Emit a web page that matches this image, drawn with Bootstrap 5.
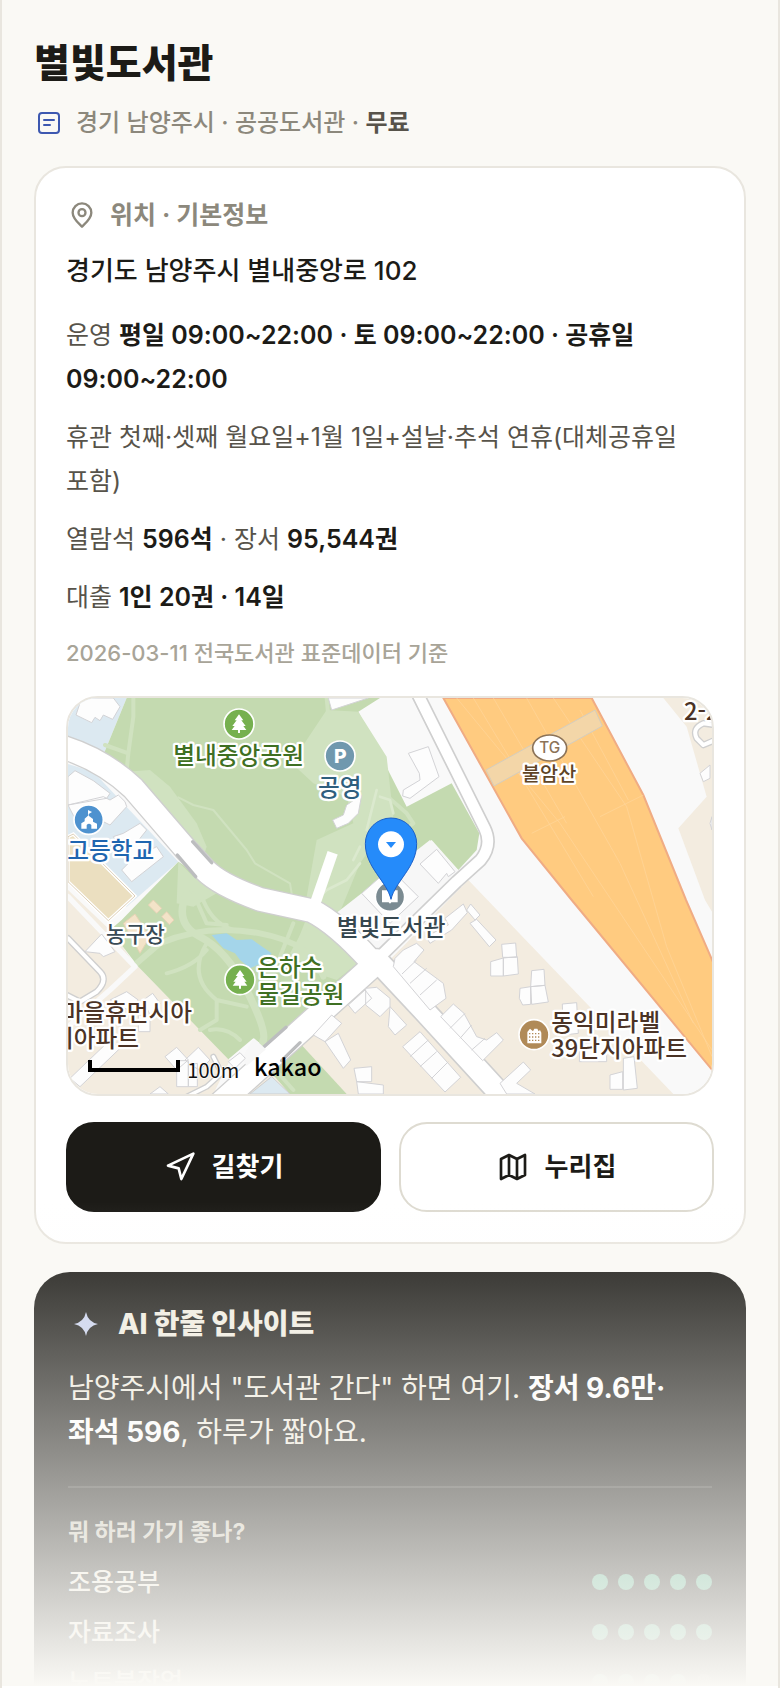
<!DOCTYPE html>
<html lang="ko">
<head>
<meta charset="utf-8">
<meta name="viewport" content="width=device-width, initial-scale=1">
<title>별빛도서관</title>
<link href="https://cdn.jsdelivr.net/npm/bootstrap@5.3.0/dist/css/bootstrap.min.css" rel="stylesheet">
<style>
  :root { --ink: #1c1b17; --soft: #57534a; --muted: #8c887c; --faint: #a8a498; --line: #e9e6df; --paper: #faf9f5; }
  body { font-family: Inter, "Noto Sans CJK KR", sans-serif; font-size: 25px; line-height: 44px; color: var(--ink); background: #fff; word-break: keep-all; }
  svg { flex: none; }
  .shell { height: 100vh; overflow: hidden; background: var(--paper); border: solid var(--line); border-width: 0 2px; padding: 36px 32px 0; }
  .lib-title { font-size: 39px; line-height: 54px; font-weight: 800; margin-bottom: 12px; }
  .lib-sub { font-size: 24px; line-height: 42px; font-weight: 500; color: var(--muted); padding-left: 4px; gap: 16px; margin-bottom: 22px; }
  .lib-sub strong { color: var(--soft); font-weight: 700; }
  .info-card { border: 2px solid var(--line); border-radius: 32px; padding: 29px 30px 30px; margin-bottom: 28px; }
  .sec-head { font-size: 25px; line-height: 36px; font-weight: 700; color: var(--muted); gap: 14px; margin-bottom: 16px; padding-left: 2px; }
  .addr { font-size: 26px; line-height: 44px; font-weight: 500; margin-bottom: 20px; }
  .facts { gap: 14px; color: var(--soft); margin-bottom: 14px; }
  .facts p { margin: 0; }
  .facts strong { color: var(--ink); font-weight: 600; }
  .source { font-size: 22px; line-height: 40px; font-weight: 500; color: var(--faint); margin-bottom: 23px; }
  .mapbox { height: 400px; border: 2px solid var(--line); border-radius: 32px; overflow: hidden; margin-bottom: 26px; }
  .mapbox svg { width: 100%; height: 100%; display: block; }
  .act { --bs-btn-font-size: 26px; --bs-btn-line-height: 44px; --bs-btn-font-weight: 700; --bs-btn-border-width: 2px; --bs-btn-border-radius: 28px; --bs-btn-padding-y: 21px; gap: 16px; }
  .act-main { --bs-btn-bg: var(--ink); --bs-btn-color: #fff; --bs-btn-border-color: var(--ink); --bs-btn-hover-bg: #333; --bs-btn-hover-color: #fff; }
  .act-side { --bs-btn-bg: #fff; --bs-btn-color: var(--ink); --bs-btn-border-color: #dedbd1; --bs-btn-hover-bg: #f4f3ee; }
  .acts { gap: 18px; }
  .insight { background: var(--ink); color: #f0ece0; border-radius: 36px; padding: 32px 34px; }
  .insight h2 { font-size: 28px; line-height: 40px; font-weight: 800; gap: 18px; margin-bottom: 22px; padding-left: 4px; }
  .lead-text { font-size: 28px; line-height: 44px; margin-bottom: 32px; }
  .lead-text strong { color: #fff; font-weight: 700; }
  .fit { border-top: 2px solid #3a3934; padding-top: 24px; }
  .fit h3 { font-size: 23px; line-height: 40px; font-weight: 700; margin-bottom: 10px; color: #c9c5b8; }
  .fit li { font-size: 25px; line-height: 40px; margin-bottom: 10px; font-weight: 500; }
  .dots { gap: 10px; }
  .dots i { width: 16px; height: 16px; border-radius: 50%; background: #4faa86; }
  .dots i.off { background: #3a3934; }
  .veil { height: 486px; background: linear-gradient(rgba(250,249,245,0), #faf9f5); border-bottom: 2px solid #fff; pointer-events: none; }
  .lbl { font-family: "Noto Sans CJK KR", sans-serif; font-weight: 500; font-size: 71px; stroke: #fff; stroke-width: 14px; stroke-linejoin: round; paint-order: stroke; }
  .lbl-court { font-size: 64px; }
  .lbl-toll { font-size: 59px; }
</style>
</head>
<body>
<main class="shell position-relative">
  <h1 class="lib-title">별빛도서관</h1>
  <div class="lib-sub d-flex align-items-center">
    <svg width="22" height="22" viewBox="0 0 22 22" fill="none" stroke="#3d58b0" stroke-width="2" stroke-linecap="round"><rect x="1" y="1" width="20" height="20" rx="3"/><path d="M6 8h10M6 13h6"/></svg>
    <span>경기 남양주시 · 공공도서관 · <strong>무료</strong></span>
  </div>

  <section class="card info-card">
    <h2 class="sec-head d-flex align-items-center">
      <svg width="28" height="28" viewBox="0 0 24 24" fill="none" stroke="#8c887c" stroke-width="2" stroke-linecap="round" stroke-linejoin="round"><path d="M20 10c0 5-5 9-8 12-3-3-8-7-8-12a8 8 0 0 1 16 0z"/><circle cx="12" cy="10" r="3"/></svg>
      위치 · 기본정보
    </h2>
    <p class="addr">경기도 남양주시 별내중앙로 102</p>
    <div class="facts d-flex flex-column">
      <p>운영 <strong>평일 09:00~22:00 · 토 09:00~22:00 · 공휴일 09:00~22:00</strong></p>
      <p>휴관 첫째·셋째 월요일+1월 1일+설날·추석 연휴(대체공휴일 포함)</p>
      <p>열람석 <strong>596석</strong> · 장서 <strong>95,544권</strong></p>
      <p>대출 <strong>1인 20권 · 14일</strong></p>
    </div>
    <p class="source">2026-03-11 전국도서관 표준데이터 기준</p>

    <div class="mapbox">
      <svg viewBox="24 24 1932 1188" preserveAspectRatio="xMidYMid slice" role="img" aria-label="별빛도서관 주변 지도">
        <rect x="24" y="24" width="1932" height="1188" fill="#f9f9f9"/>
        <!-- districts -->
        <g fill="#f3ece0">
          <path d="M24 600L165 735 215 810 510 1110 460 1212H24z"/>
          <path d="M1225 570L1840 1212H560L935 865z"/>
          <path d="M1810 24L1880 110 1940 320 1855 415 1935 630 1956 665V24z"/>
        </g>
        <path d="M24 24H200L130 195 24 140z" fill="#dce9f1"/>
        <path d="M24 222L100 245 355 515 200 650 24 560z" fill="#dce9f1"/>
        <g fill="#c4dab0">
          <path d="M200 24H960L895 65 1040 350 1175 280 1258 430 1250 480 1195 540 1115 450 830 690 620 620 480 560 250 310 130 195z"/>
          <path d="M355 515L185 690 150 720 235 830 505 1108 580 1045 620 1075 893 820 830 750 750 695 580 650 440 570z"/>
          <path d="M720 1060L860 1212H690L600 1110z"/>
        </g>
        <!-- paler lawns -->
        <g fill="#d0e2c0">
          <path d="M200 245L270 240 330 290 410 400 440 470 430 500 250 310z"/>
          <path d="M800 60L895 65 980 200 1000 380 900 520 830 690 740 620 770 450 880 400 860 320 760 280 695 220 740 150z"/>
          <path d="M355 515L400 560 470 610 400 650 350 640z"/>
          <path d="M770 700L893 820 830 870 770 850 690 790 740 700z"/>
        </g>
        <g fill="none" stroke="#d0e2c0" stroke-width="12" stroke-linecap="round" stroke-linejoin="round">
          <path d="M220 24V80L205 190 200 240M135 165L205 190M800 24L805 80"/>
          <path d="M355 322L400 345 460 360 560 480 585 520 690 580 695 610" stroke-width="6"/>
          <path d="M380 610Q340 700 420 740T560 900 610 1050 640 1060" stroke-width="22"/>
          <path d="M230 820L300 760Q440 700 600 730T790 860" stroke-width="18"/>
          <path d="M320 850Q400 830 440 780M440 760Q380 860 470 930L560 950M470 930V990L420 1020M450 1020Q500 1010 540 1050M420 605Q450 700 520 720M400 610L440 700 500 705"/>
          <path d="M950 300L920 420 960 480M960 300L1040 370 1060 400 1020 430M700 700L660 800M740 700L700 800M620 1110L700 1200"/>
          <path d="M950 300L920 420M900 520L860 570 800 600 760 640M960 320L990 330 1000 370M900 470L880 510" stroke="#dbe9ce" stroke-width="8"/>
        </g>
        <path d="M455 735L500 730 530 750 575 748 635 790 615 815 570 835 540 810 525 790 490 775z" fill="#a4d5ea"/>
        <g fill="#f3e3c8" stroke="#e6d3b4" stroke-width="3">
          <path d="M265 645L280 630 305 655 290 670zM305 680L320 665 342 690 328 704zM190 700L225 672 270 740 240 790z"/>
        </g>
        <path d="M24 440L40 432 225 618 145 692 24 575z" fill="#ebdfc0" stroke="#fff" stroke-width="10"/>
        <path d="M24 440L40 432 225 618 145 692 24 575z" fill="none" stroke="#cbb896" stroke-width="2"/>
        <!-- toll plaza -->
        <path d="M1150 24L1385 445 1535 630 1965 1150V830L1878 630 1750 315 1595 24z" fill="#ffcb80" stroke="#f0ac84" stroke-width="6"/>
        <g fill="none" stroke="#ffd79b" stroke-width="2"><path d="M1190 24L1500 400M1240 24L1600 620M1300 24L1520 400M1400 24L1680 520 1900 1000M1480 24L1700 350 1820 770 1956 1100M1560 60L1705 330M1415 430L1515 380M1620 380L1750 315M1500 400L1956 1080"/></g>
        <path d="M1278 240L1605 60 1627 108 1302 288z" fill="#f3d6a8" stroke="#d3cdbf" stroke-width="3"/>
        <!-- roads -->
        <path d="M830 668L1110 450 1200 545 960 775Q940 790 915 765z" fill="#f7f7f7"/>
        <g fill="none" stroke-linecap="round" stroke-linejoin="round">
          <path d="M24 620L225 830 150 900 24 1010" stroke="#f9f9f9" stroke-width="16"/>
          <g stroke="#cfcfcf">
            <path d="M10 172Q130 210 220 295L375 475 435 540Q480 585 600 628L755 662Q830 700 930 810" stroke-width="76"/>
            <path d="M930 835L480 1240" stroke-width="76"/>
            <path d="M950 810L1095 965 1310 1200" stroke-width="74"/>
            <path d="M955 805L1190 575 1262 510Q1298 465 1274 415L1072 10" stroke-width="42"/>
            <path d="M24 745L120 845Q145 870 110 905L60 935 20 915" stroke-width="20"/>
            <path d="M370 1225L440 1190 485 1150 460 1100" stroke-width="18"/>
            <path d="M1965 105L1930 100Q1895 115 1910 145L1930 165 1965 150" stroke-width="20"/>
          </g>
          <g stroke="#fff">
            <path d="M10 172Q130 210 220 295L375 475 435 540Q480 585 600 628L755 662Q830 700 930 810" stroke-width="68"/>
            <path d="M930 835L480 1240" stroke-width="68"/>
            <path d="M950 810L1095 965 1310 1200" stroke-width="64"/>
            <path d="M955 805L1190 575 1262 510Q1298 465 1274 415L1072 10" stroke-width="32"/>
            <path d="M24 745L120 845Q145 870 110 905L60 935 20 915" stroke-width="12"/>
            <path d="M370 1225L440 1190 485 1150 460 1100" stroke-width="10"/>
            <path d="M1965 105L1930 100Q1895 115 1910 145L1930 165 1965 150" stroke-width="12"/>
            <path d="M818 488L762 650" stroke-width="32" stroke-linecap="butt"/>
          </g>
          <path d="M398 455L455 518M352 495L407 560M612 1070L678 1012M665 1112L720 1058" stroke="#bcbdbf" stroke-width="10"/>
        </g>
        <path d="M545 1105L582 1045 618 1078 560 1128z" fill="#f7f7f7"/>
        <path d="M570 1212L635 1160 690 1212z" fill="#dce9f1" stroke="#cfcfcf" stroke-width="3"/>
        <!-- buildings -->
        <g fill="#fdfdfd" stroke="#d3d3d6" stroke-width="3" stroke-linejoin="round">
          <path d="M65 24L48 75 95 98 105 82 120 92 130 75 158 88 180 50 160 24z"/>
          <path d="M24 260L45 242 100 272 150 310 140 325 24 345zM150 330L175 315 195 335 200 350 150 405 130 395 60 415 24 345 130 320zM190 430L240 400 260 420 240 445 270 480 290 470 310 500 215 575 185 540 205 520 160 440z"/>
          <path d="M805 24L815 60 925 24zM860 345L905 315 895 370 865 400 830 415 818 390 850 375z"/>
          <path d="M1045 190L1105 170 1137 260 1050 325 1028 318 1030 300 1080 270 1078 250zM1080 522L1130 478 1185 545 1165 560 1160 550 1135 580z"/>
          <path d="M905 610L990 535 1075 620 990 700z"/>
          <path d="M75 785L125 732 165 785 130 800 120 790zM150 930L200 905 235 930 205 960zM250 930L278 910 300 940 270 975zM235 975H270V1025H235z"/>
          <path d="M30 1165L150 1050 180 1075 60 1190zM315 1100L350 1072 385 1110 350 1140zM375 1110L415 1072 450 1110 420 1140 400 1130zM350 1112H385V1190H350zM385 1125L412 1120V1190H385zM505 1115L540 1088 556 1105 525 1135zM270 1212L300 1190 325 1212z"/>
          <path d="M865 945L915 900 935 925 885 970zM917 895L950 892 990 925V950L960 980 917 945zM760 1035L815 975 845 1000 795 1055zM795 1055L835 1030 872 1110 850 1135zM882 1135L935 1130V1175H890zM890 1175L970 1185V1212H895z"/>
          <path d="M1155 685L1210 642 1222 668 1175 720 1110 760 1098 740 1165 705zM1220 660L1232 642 1260 675 1245 690zM1230 700L1250 688 1308 750 1288 770z"/>
          <path d="M1325 763L1367 759 1370 802H1328zM1292 815L1330 804V858H1292zM1330 804L1372 800 1375 852 1330 858z"/>
          <path d="M1415 842L1452 838 1455 886 1412 890zM1380 895L1412 890V943L1388 945 1378 925zM1412 890L1455 886 1465 936 1415 943z"/>
          <path d="M1507 942L1550 938 1555 1030 1510 1035zM1560 1060L1640 1055V1115H1558zM1690 1105L1722 1100 1732 1195 1690 1200zM1650 1155L1688 1145V1198H1650z"/>
          <path d="M1005 805L1030 780 1070 760 1092 780 1062 815 1150 880 1158 925 1110 960 1000 830z"/>
          <path d="M1142 980L1180 942 1212 970 1250 1040 1280 1050 1310 1028 1330 1050 1268 1112z"/>
          <path d="M1028 1070L1080 1025 1202 1162 1155 1206zM990 950L1040 1005 1005 1035 985 1010zM1320 1180L1390 1116 1412 1140 1370 1180 1425 1212H1340z"/>
          <path d="M1920 250L1950 225V265L1930 275zM1950 400L1956 380V420z"/>
          <path d="M1026 852L1070 810M1050 880L1100 835M1080 915L1130 870M1170 1015L1215 970M1200 1045L1235 1005M1235 1080L1275 1045M1050 1100L1105 1050M1080 1130L1130 1085M1115 1165L1165 1115" fill="none"/>
        </g>
        <!-- markers -->
        <g stroke="#fff" stroke-width="5">
          <circle cx="537" cy="102" r="45" fill="#76b04f"/><circle cx="840" cy="198" r="45" fill="#7098ae"/>
          <circle cx="86" cy="389" r="44" fill="#4e92cf"/><circle cx="540" cy="869" r="45" fill="#76b04f"/>
          <circle cx="1422" cy="1034" r="45" fill="#b08a58"/><circle cx="990" cy="620" r="44" fill="#7b8b92"/>
        </g>
        <g fill="#fff">
          <path id="tree" d="M537 73l13 18h-6l13 17h-7l9 12h-19v9h-6v-9h-19l9-12h-7l13-17h-6z"/>
          <use href="#tree" x="3" y="767"/>
          <path d="M84 360l12 6-10 6v5l13 10v8l12 6v15H94V405q-7-8-14 0v11H64V400l10-6v-8l10-9z"/>
          <path d="M1402 1060v-34l8-10 9 8 4-8 9 0 4 8 4-4 4 8v32z"/>
          <path d="M966 601h20l4 4 4-4h19v36h-19l-4 4-4-4h-20z"/>
        </g>
        <text x="841" y="219" text-anchor="middle" font-size="58" font-family="Inter, sans-serif" font-weight="800" fill="#fff">P</text>
        <path d="M1407 1031h32M1407 1041h32M1407 1051h32" stroke="#b08a58" stroke-width="4" stroke-dasharray="4 5"/>
        <path d="M993 628C981 574 916 532 916 461A77 77 0 0 1 1070 461C1070 532 1005 574 993 628z" fill="#258bfa" stroke="#1a5fc9" stroke-width="3"/>
        <circle cx="993" cy="463" r="39" fill="#fff"/><path d="M978 456H1008L993 474z" fill="#258bfa"/>
        <ellipse cx="1469" cy="174" rx="51" ry="39" fill="#fff" stroke="#8c7358" stroke-width="5"/>
        <text x="1469" y="190" text-anchor="middle" font-size="46" font-family="Inter, sans-serif" font-weight="500" fill="#8c7358">TG</text>
        <!-- place names -->
        <g class="lbl">
          <g fill="#3f7023"><text x="340" y="222">별내중앙공원</text><text x="592" y="859">은하수</text><text x="592" y="938">물길공원</text></g>
          <text x="774" y="318" fill="#2f5f7e">공영</text>
          <text x="22" y="508" fill="#1f66b0">고등학교</text>
          <text class="lbl-court" x="138" y="756" fill="#394a55">농구장</text>
          <text x="830" y="738" fill="#36474f">별빛도서관</text>
          <g fill="#4b3326"><text x="396" y="993" text-anchor="end">마을휴먼시아</text><text x="237" y="1072" text-anchor="end">지아파트</text><text x="1474" y="1023">동익미라벨</text><text x="1474" y="1101">39단지아파트</text><text x="1872" y="90">2-2</text></g>
          <text class="lbl-toll" x="1386" y="272" fill="#5f4426">불암산</text>
        </g>
        <path d="M90 1110V1140H354V1110" fill="none" stroke="#000" stroke-width="12"/>
        <text x="382" y="1163" font-size="60" font-family="'Noto Sans CJK KR', sans-serif" fill="#111" stroke="#fff" stroke-width="4" paint-order="stroke">100m</text>
        <text x="582" y="1157" font-size="70" font-family="'Noto Sans CJK KR', sans-serif" font-weight="500" fill="#000">kakao</text>
      </svg>
    </div>

    <div class="acts d-flex">
      <button type="button" class="btn act act-main flex-fill w-50 d-flex align-items-center justify-content-center">
        <svg width="32" height="32" viewBox="0 0 24 24" fill="none" stroke="currentColor" stroke-width="2" stroke-linecap="round" stroke-linejoin="round"><path d="M3 11L22 2 13 21 11 13z"/></svg>길찾기
      </button>
      <button type="button" class="btn act act-side flex-fill w-50 d-flex align-items-center justify-content-center">
        <svg width="32" height="32" viewBox="0 0 24 24" fill="none" stroke="currentColor" stroke-width="2" stroke-linecap="round" stroke-linejoin="round"><path d="M3 6L9 3 15 6 21 3V18L15 21 9 18 3 21zM9 3V18M15 6V21"/></svg>누리집
      </button>
    </div>
  </section>

  <section class="insight">
    <h2 class="d-flex align-items-center">
      <svg width="28" height="28" viewBox="0 0 28 28" fill="#c9d2ee"><path d="M14 2Q16 12 26 14 16 16 14 26 12 16 2 14 12 12 14 2z"/></svg>
      AI 한줄 인사이트
    </h2>
    <p class="lead-text">남양주시에서 "도서관 간다" 하면 여기. <strong>장서 9.6만·좌석 596</strong>, 하루가 짧아요.</p>
    <div class="fit">
      <h3>뭐 하러 가기 좋나?</h3>
      <ul class="list-unstyled m-0">
        <li class="d-flex align-items-center justify-content-between">조용공부<span class="dots d-flex"><i></i><i></i><i></i><i></i><i></i></span></li>
        <li class="d-flex align-items-center justify-content-between">자료조사<span class="dots d-flex"><i></i><i></i><i></i><i></i><i></i></span></li>
        <li class="d-flex align-items-center justify-content-between">노트북작업<span class="dots d-flex"><i></i><i></i><i></i><i></i><i class="off"></i></span></li>
      </ul>
    </div>
  </section>
  <div class="veil position-absolute start-0 end-0 bottom-0"></div>
</main>
<script src="https://cdn.jsdelivr.net/npm/bootstrap@5.3.0/dist/js/bootstrap.bundle.min.js"></script>
</body>
</html>
